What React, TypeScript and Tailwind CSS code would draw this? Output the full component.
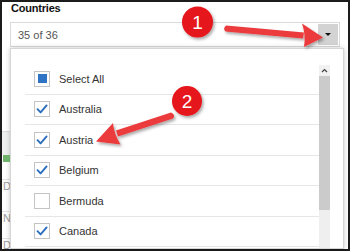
import { Fragment } from 'react';

const countries = [
  { name: 'Select All', state: 'partial' },
  { name: 'Australia', state: 'checked' },
  { name: 'Austria', state: 'checked' },
  { name: 'Belgium', state: 'checked' },
  { name: 'Bermuda', state: 'empty' },
  { name: 'Canada', state: 'checked' },
  { name: 'Chile', state: 'checked' },
];

function Box({ state }: { state: string }) {
  return (
    <span className="flex h-[16px] w-[16px] shrink-0 items-center justify-center border border-[#c4c4c4] bg-white">
      {state === 'partial' && <span className="h-[9px] w-[9px] bg-[#2e73c4]" />}
      {state === 'checked' && (
        <svg width="14" height="14" viewBox="0 0 14 14" fill="none">
          <path d="M2.5 7.2 L5.6 10.4 L11.6 3.4" stroke="#2a6ebd" strokeWidth="1.9" strokeLinecap="round" strokeLinejoin="round" />
        </svg>
      )}
    </span>
  );
}

function Annotations() {
  return (
    <svg className="pointer-events-none absolute inset-0" width="350" height="251" viewBox="0 0 350 251">
      <defs>
        <filter id="sh" x="-30%" y="-30%" width="160%" height="160%">
          <feDropShadow dx="1.5" dy="2" stdDeviation="1.4" floodColor="#000" floodOpacity="0.35" />
        </filter>
      </defs>
      {/* arrow 1 */}
      <g filter="url(#sh)" fill="#ec3a3c" stroke="none">
        <path d="M226 25.5 L304 32.5 L303 38.5 L225.5 31.5 Q222.5 28.3 226 25.5 Z" />
        <path d="M302 23.5 L323 37.5 L304 47 Q306 35 302 23.5 Z" />
      </g>
      {/* arrow 2 */}
      <g filter="url(#sh)" fill="#ec3a3c" stroke="none">
        <path d="M171 112.5 L116 130.5 L118 136.5 L173 118.5 Q176 115 171 112.5 Z" />
        <path d="M113 123 L96 141.5 L120.5 144.5 Q114 134 113 123 Z" />
      </g>
      <g filter="url(#sh)">
        <circle cx="197.5" cy="22" r="15.5" fill="#e5141b" />
        <circle cx="187" cy="101" r="15" fill="#e5141b" />
      </g>
      <text x="197.5" y="28.5" textAnchor="middle" fill="#fff" fontSize="19" fontFamily="Liberation Sans, Arial, sans-serif">1</text>
      <text x="187" y="107.5" textAnchor="middle" fill="#fff" fontSize="19" fontFamily="Liberation Sans, Arial, sans-serif">2</text>
    </svg>
  );
}

export default function App() {
  return (
    <div className="relative h-[251px] w-[350px] overflow-hidden bg-white font-['Liberation_Sans',Arial,sans-serif]">
      <div className="flex h-full flex-col border-2 border-[#1c1c1c]">
        <div className="h-[20px] pl-[9px] text-[11px] font-bold leading-[13px] tracking-[-0.2px] text-[#111]">
          Countries
        </div>
        <div className="mx-[8px] flex h-[25px] items-center justify-between border border-[#dadada] pl-[7px] pr-[1px] text-[11px] text-[#555]">
          <span className="pt-[1px]">35 of 36</span>
          <span className="flex h-[21px] w-[20px] items-center justify-center bg-[#d3d3d3]">
            <span className="h-0 w-0 border-x-[3px] border-t-[3px] border-x-transparent border-t-[#111]" />
          </span>
        </div>
        <div className="mt-[1px] flex min-h-0 flex-1">
          <div className="flex w-[8px] shrink-0 flex-col overflow-hidden text-[11px] leading-[13px] text-[#9a9a9a]">
            <div className="h-[83px] shrink-0" />
            <div className="h-[24px] shrink-0 border-t border-[#dcdcdc] bg-[#eef0f0]" />
            <div className="h-[7px] w-[7px] shrink-0 translate-x-[1px] bg-[#6fb36b]" />
            <div className="h-[18px] shrink-0 border-b border-[#e4e4e4]" />
            <div className="h-[16px] shrink-0 pl-[1px]">Dr.</div>
            <div className="h-[16px] shrink-0 border-b border-[#e4e4e4]" />
            <div className="h-[18px] shrink-0 pl-[1px]">Na</div>
            <div className="h-[9px] shrink-0 border-b border-[#e4e4e4]" />
            <div className="shrink-0 pl-[1px]">D</div>
          </div>
          <div className="flex w-[334px] shrink-0 border border-[#d6d6d6] bg-white pl-[14px] pt-[15px] shadow-[0_0_5px_rgba(0,0,0,0.22)]">
            <div className="w-[294px] shrink-0 text-[11px] text-[#333]">
              {countries.map((c) => (
                <Fragment key={c.name}>
                  <div className="flex h-[30.5px] items-center gap-[9px] border-b border-[#e6e6e6] pl-[9px]">
                    <Box state={c.state} />
                    <span>{c.name}</span>
                  </div>
                </Fragment>
              ))}
            </div>
            <div className="mt-[1px] flex w-[11px] shrink-0 flex-col bg-[#efefef]">
              <div className="flex h-[11px] items-center justify-center bg-[#f1f1f1]">
                <svg width="7" height="5" viewBox="0 0 7 5">
                  <path d="M1 4 L3.5 1.5 L6 4" fill="none" stroke="#444" strokeWidth="1.2" />
                </svg>
              </div>
              <div className="h-[134px] bg-[#cbcbcb]" />
            </div>
          </div>
        </div>
      </div>
      <Annotations />
    </div>
  );
}
